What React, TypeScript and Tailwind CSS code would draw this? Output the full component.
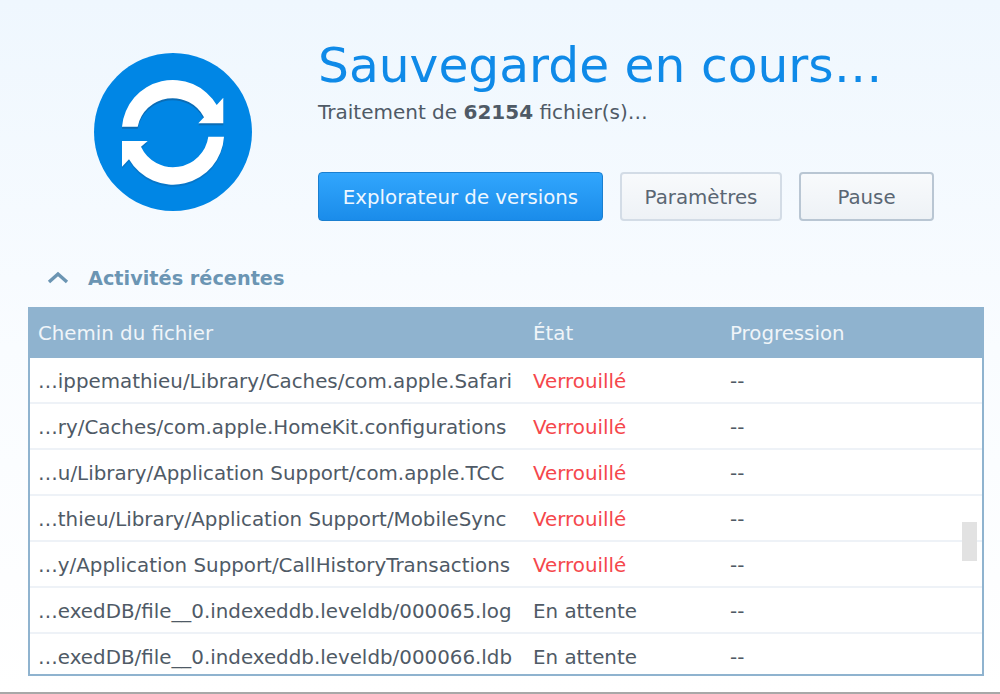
const rows = [
  { path: '…ippemathieu/Library/Caches/com.apple.Safari', state: 'Verrouillé' },
  { path: '…ry/Caches/com.apple.HomeKit.configurations', state: 'Verrouillé' },
  { path: '…u/Library/Application Support/com.apple.TCC', state: 'Verrouillé' },
  { path: '…thieu/Library/Application Support/MobileSync', state: 'Verrouillé' },
  { path: '…y/Application Support/CallHistoryTransactions', state: 'Verrouillé' },
  { path: '…exedDB/file__0.indexeddb.leveldb/000065.log', state: 'En attente' },
  { path: '…exedDB/file__0.indexeddb.leveldb/000066.ldb', state: 'En attente' },
];

const topArrow = 'M28 73.7A51 51 0 0 1 122.7 52L129.3 44.7V70.3H104.3L110 64.3A35.5 35.5 0 0 0 43.7 73.7Z';
const bottomArrow = 'M130 83.7A51 51 0 0 1 35 106.3L28 113.7V88H53.7L47 93.7A35.5 35.5 0 0 0 114.3 83.7Z';

function SyncIcon ()
{
  return (
    <svg className="w-[158px] h-[158px] shrink-0" viewBox="0 0 158 158">
      <circle cx="79" cy="79" r="79" fill="#0086e5" />
      {/* soft shadow under the arrows */}
      <path d={topArrow} fill="#0b6cb5" transform="translate(0 2)" />
      <path d={bottomArrow} fill="#0b6cb5" transform="translate(0 2)" opacity="0.6" />
      <path d={topArrow} fill="#fff" />
      <path d={bottomArrow} fill="#fff" />
    </svg>
  );
}

function Row ({ path, state }: { path: string; state: string })
{
  return (
    <div className="flex items-center h-[46px] shrink-0 pl-[8px] pt-[4px] border-b-2 border-[#eef2f7] text-[19.85px] text-[#4f5a66]">
      <div className="w-[495px] whitespace-nowrap">{path}</div>
      <div className={`w-[197px] whitespace-nowrap ${state === 'Verrouillé' ? 'text-[#f5474c]' : ''}`}>{state}</div>
      <div>--</div>
    </div>
  );
}

export default function App ()
{
  return (
    <div className="h-[694px] w-[1000px] overflow-hidden flex flex-col bg-gradient-to-b from-[#eff7fe] via-[#f9fcff] to-white font-['DejaVu_Sans',sans-serif]">
      <div className="flex pl-[94px] pt-[53px]">
        <SyncIcon />
        <div className="ml-[66px] -mt-[17px]">
          <h1 className="text-[48.7px] leading-[58px] text-[#0f8ae8] whitespace-nowrap">Sauvegarde en cours…</h1>
          <p className="text-[20px] leading-[24px] mt-[6px] text-[#4f5a66]">
            Traitement de <b className="font-bold">62154</b> fichier(s)…
          </p>
          <div className="flex mt-[48px] gap-[17px] text-[19.8px]">
            <button className="w-[285px] h-[49px] pt-[2px] rounded-[4px] border border-[#1a7fd0] bg-gradient-to-b from-[#31a6fd] to-[#1a8cea] text-[#eef7ff]">
              Explorateur de versions
            </button>
            <button className="w-[162px] h-[49px] pt-[2px] rounded-[4px] border-2 border-[#d3dce6] bg-gradient-to-b from-[#f8fafc] to-[#eef2f6] text-[#5a6673]">
              Paramètres
            </button>
            <button className="w-[135px] h-[49px] pt-[2px] rounded-[4px] border-2 border-[#b9c6d3] bg-gradient-to-b from-[#f8fafc] to-[#eef2f6] text-[#5a6673]">
              Pause
            </button>
          </div>
        </div>
      </div>

      <div className="flex items-center h-[28px] mt-[44px] pl-[48px] text-[#6b95b3]">
        <svg className="w-[20px] h-[12px] -translate-y-px overflow-visible" viewBox="0 0 20 12" fill="none" stroke="currentColor" strokeWidth="3.4">
          <path d="M1 10l9-8 9 8" />
        </svg>
        <span className="ml-[20px] text-[19.3px] font-bold">Activités récentes</span>
      </div>

      <div className="relative mt-[14px] mx-[28px] w-[956px] h-[369px] flex flex-col overflow-hidden border-2 border-t-0 border-[#8fb3cf] bg-white">
        <div className="flex items-center h-[51px] shrink-0 pl-[8px] pt-[2px] -mx-[2px] bg-[#8fb3cf] text-[19.8px] text-[#f0f5f9]">
          <div className="w-[497px] pl-[2px]">Chemin du fichier</div>
          <div className="w-[197px]">État</div>
          <div>Progression</div>
        </div>
        {rows.map((row) => (
          <Row key={row.path} path={row.path} state={row.state} />
        ))}
        <div className="absolute right-[5px] top-[215px] w-[15px] h-[39px] bg-[#e2e2e2]" />
      </div>

      <div className="mt-auto h-[2px] bg-[#a8a8a8]" />
    </div>
  );
}
